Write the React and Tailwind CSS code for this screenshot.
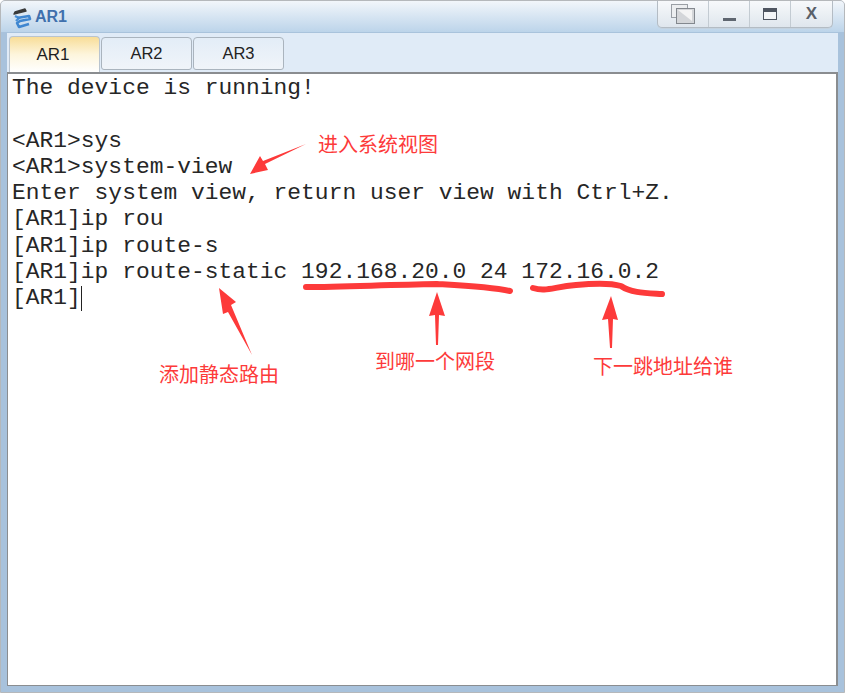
import { Fragment } from 'react'

const LINES = [
  'The device is running!',
  '',
  '<AR1>sys',
  '<AR1>system-view',
  'Enter system view, return user view with Ctrl+Z.',
  '[AR1]ip rou',
  '[AR1]ip route-s',
  '[AR1]ip route-static 192.168.20.0 24 172.16.0.2',
]

const TABS = ['AR1', 'AR2', 'AR3']

const NOTES = [
  { text: '进入系统视图', cls: 'left-[317px] top-[131px]' },
  { text: '添加静态路由', cls: 'left-[158px] top-[361px]' },
  { text: '到哪一个网段', cls: 'left-[374px] top-[348px]' },
  { text: '下一跳地址给谁', cls: 'left-[592px] top-[353px]' },
]

function AppIcon() {
  return (
    <svg width="22" height="24" viewBox="0 0 22 24" className="shrink-0">
      <path d="M3 9 L4 7 L14 4 L15 6 Z" fill="#3a3a3a" stroke="#3a3a3a" strokeWidth="1.4" strokeLinejoin="round" />
      <path d="M4 11 L8 13 L5 16" fill="none" stroke="#4a8fd6" strokeWidth="2.4" />
      <path d="M6 13 L18 11 L19 14 L9 16 L6 18 L8 22 L18 19" fill="none" stroke="#3f86d0" strokeWidth="2.6" strokeLinejoin="round" />
    </svg>
  )
}

function WindowButtons() {
  return (
    <div className="flex h-[27px] w-[176px] shrink-0 rounded-b-[5px] border border-t-0 border-[#b4bcc4] bg-gradient-to-b from-[#f7f9fb] to-[#dfe6ed] shadow-[0_1px_0_#c4d2df]">
      <div className="flex w-[51px] items-center justify-center border-r border-[#c3cbd2]">
        <svg width="26" height="22" viewBox="0 0 26 22">
          <rect x="1.5" y="1.5" width="16" height="13" fill="#eceef0" stroke="#9a9fa5" />
          <rect x="6.5" y="5.5" width="18" height="15" fill="#d4d6d9" stroke="#83888e" />
          <path d="M8 7 H22 V18 Z" fill="#f4f4f4" />
        </svg>
      </div>
      <div className="flex w-[41px] items-center justify-center border-r border-[#c3cbd2]">
        <div className="mt-[11px] h-[3px] w-[13px] bg-[#5f6670]" />
      </div>
      <div className="flex w-[41px] items-center justify-center border-r border-[#c3cbd2]">
        <div className="h-[12px] w-[14px] border border-[#4e5560] border-t-[4px] bg-[#f3f5f7]" />
      </div>
      <div className="flex flex-1 items-center justify-center font-['Liberation_Sans',sans-serif] text-[17px] font-bold text-[#5a6069]">
        X
      </div>
    </div>
  )
}

function Tab({ label, active }) {
  return (
    <div
      className={
        active
          ? "flex h-[36px] w-[91px] items-center justify-center rounded-t-[4px] border border-b-0 border-[#b9c4cf] bg-gradient-to-b from-[#f8dd97] via-[#fdf5dc] to-[#ffffff] pr-[3px] font-['Liberation_Sans',sans-serif] text-[17px] text-[#1f1f1f]"
          : "mt-[1px] flex h-[33px] w-[91px] items-center justify-center rounded-[4px] rounded-b-[3px] border border-[#aab4be] bg-gradient-to-b from-[#e3edf7] to-[#f0f4f9] font-['Liberation_Sans',sans-serif] text-[16.5px] text-[#222222]"
      }
    >
      {label}
    </div>
  )
}

function Marks() {
  return (
    <svg width="845" height="693" viewBox="0 0 845 693" className="pointer-events-none absolute left-0 top-0">
      <g fill="#fd3a3a">
        <path d="M305 143 L264 163 L267 169 L249 173 L259 155 L262 160 Z" />
        <path d="M218 287 L235 301 L230 304 L251 354 L227 311 L222 313 Z" />
        <path d="M436 291 L444 315 L438 314 L437 344 L435 344 L434 314 L428 315 Z" />
        <path d="M610 295 L617 319 L612 318 L611 347 L609 347 L607 318 L601 319 Z" />
      </g>
      <g fill="none" stroke="#fd3a3a" strokeWidth="6" strokeLinecap="round" strokeLinejoin="round">
        <path d="M305 286 C340 286 380 284 436 283 C470 285 490 286 509 290" />
        <path d="M532 287 C545 291 552 286 575 284 C595 282 610 282 620 285 C630 292 645 292 661 293" />
      </g>
    </svg>
  )
}

export default function App() {
  return (
    <div className="relative flex h-[693px] w-[845px] flex-col overflow-hidden rounded-t-[5px] border border-[#b5b8bb] bg-[#a8c2dc]">
      {/* title bar */}
      <div className="flex h-[31px] shrink-0 items-start justify-between bg-gradient-to-b from-[#f2f6fa] to-[#bcd4ea] pl-[10px] pr-[11px]">
        <div className="flex items-center gap-[2px] pt-[4px]">
          <AppIcon />
          <span className="font-['Liberation_Sans',sans-serif] text-[16px] font-bold text-[#3f70ad]">AR1</span>
        </div>
        <WindowButtons />
      </div>

      <div className="flex min-h-0 flex-1 flex-col px-[6px] pb-[6px]">
        {/* tabs */}
        <div className="flex h-[40px] shrink-0 items-start gap-[1px] border-t border-[#a9c3dc] bg-[#e0ebf7] pl-[2px] pt-[3px]">
          {TABS.map((t, i) => (
            <Tab key={t} label={t} active={i === 0} />
          ))}
        </div>

        {/* terminal */}
        <div className="min-h-0 flex-1 border border-[#8a8d90] border-r-2 border-t-2 bg-white pl-[4px] pt-[1px] font-['Liberation_Mono',monospace] text-[22.9px] leading-[26.25px] tracking-[0.03px] text-[#262626]">
          {LINES.map((line, i) => (
            <Fragment key={i}>
              <div className="h-[26.25px] whitespace-pre">{line}</div>
            </Fragment>
          ))}
          <div className="flex h-[26.25px] items-center whitespace-pre">
            [AR1]
            <span className="h-[25px] w-[1px] bg-[#222222]" />
          </div>
        </div>
      </div>

      <Marks />
      {NOTES.map(n => (
        <div
          key={n.text}
          className={`absolute ${n.cls} font-['Noto_Sans_CJK_SC',sans-serif] text-[20px] leading-[24px] text-[#fd3a3a]`}
        >
          {n.text}
        </div>
      ))}
    </div>
  )
}
